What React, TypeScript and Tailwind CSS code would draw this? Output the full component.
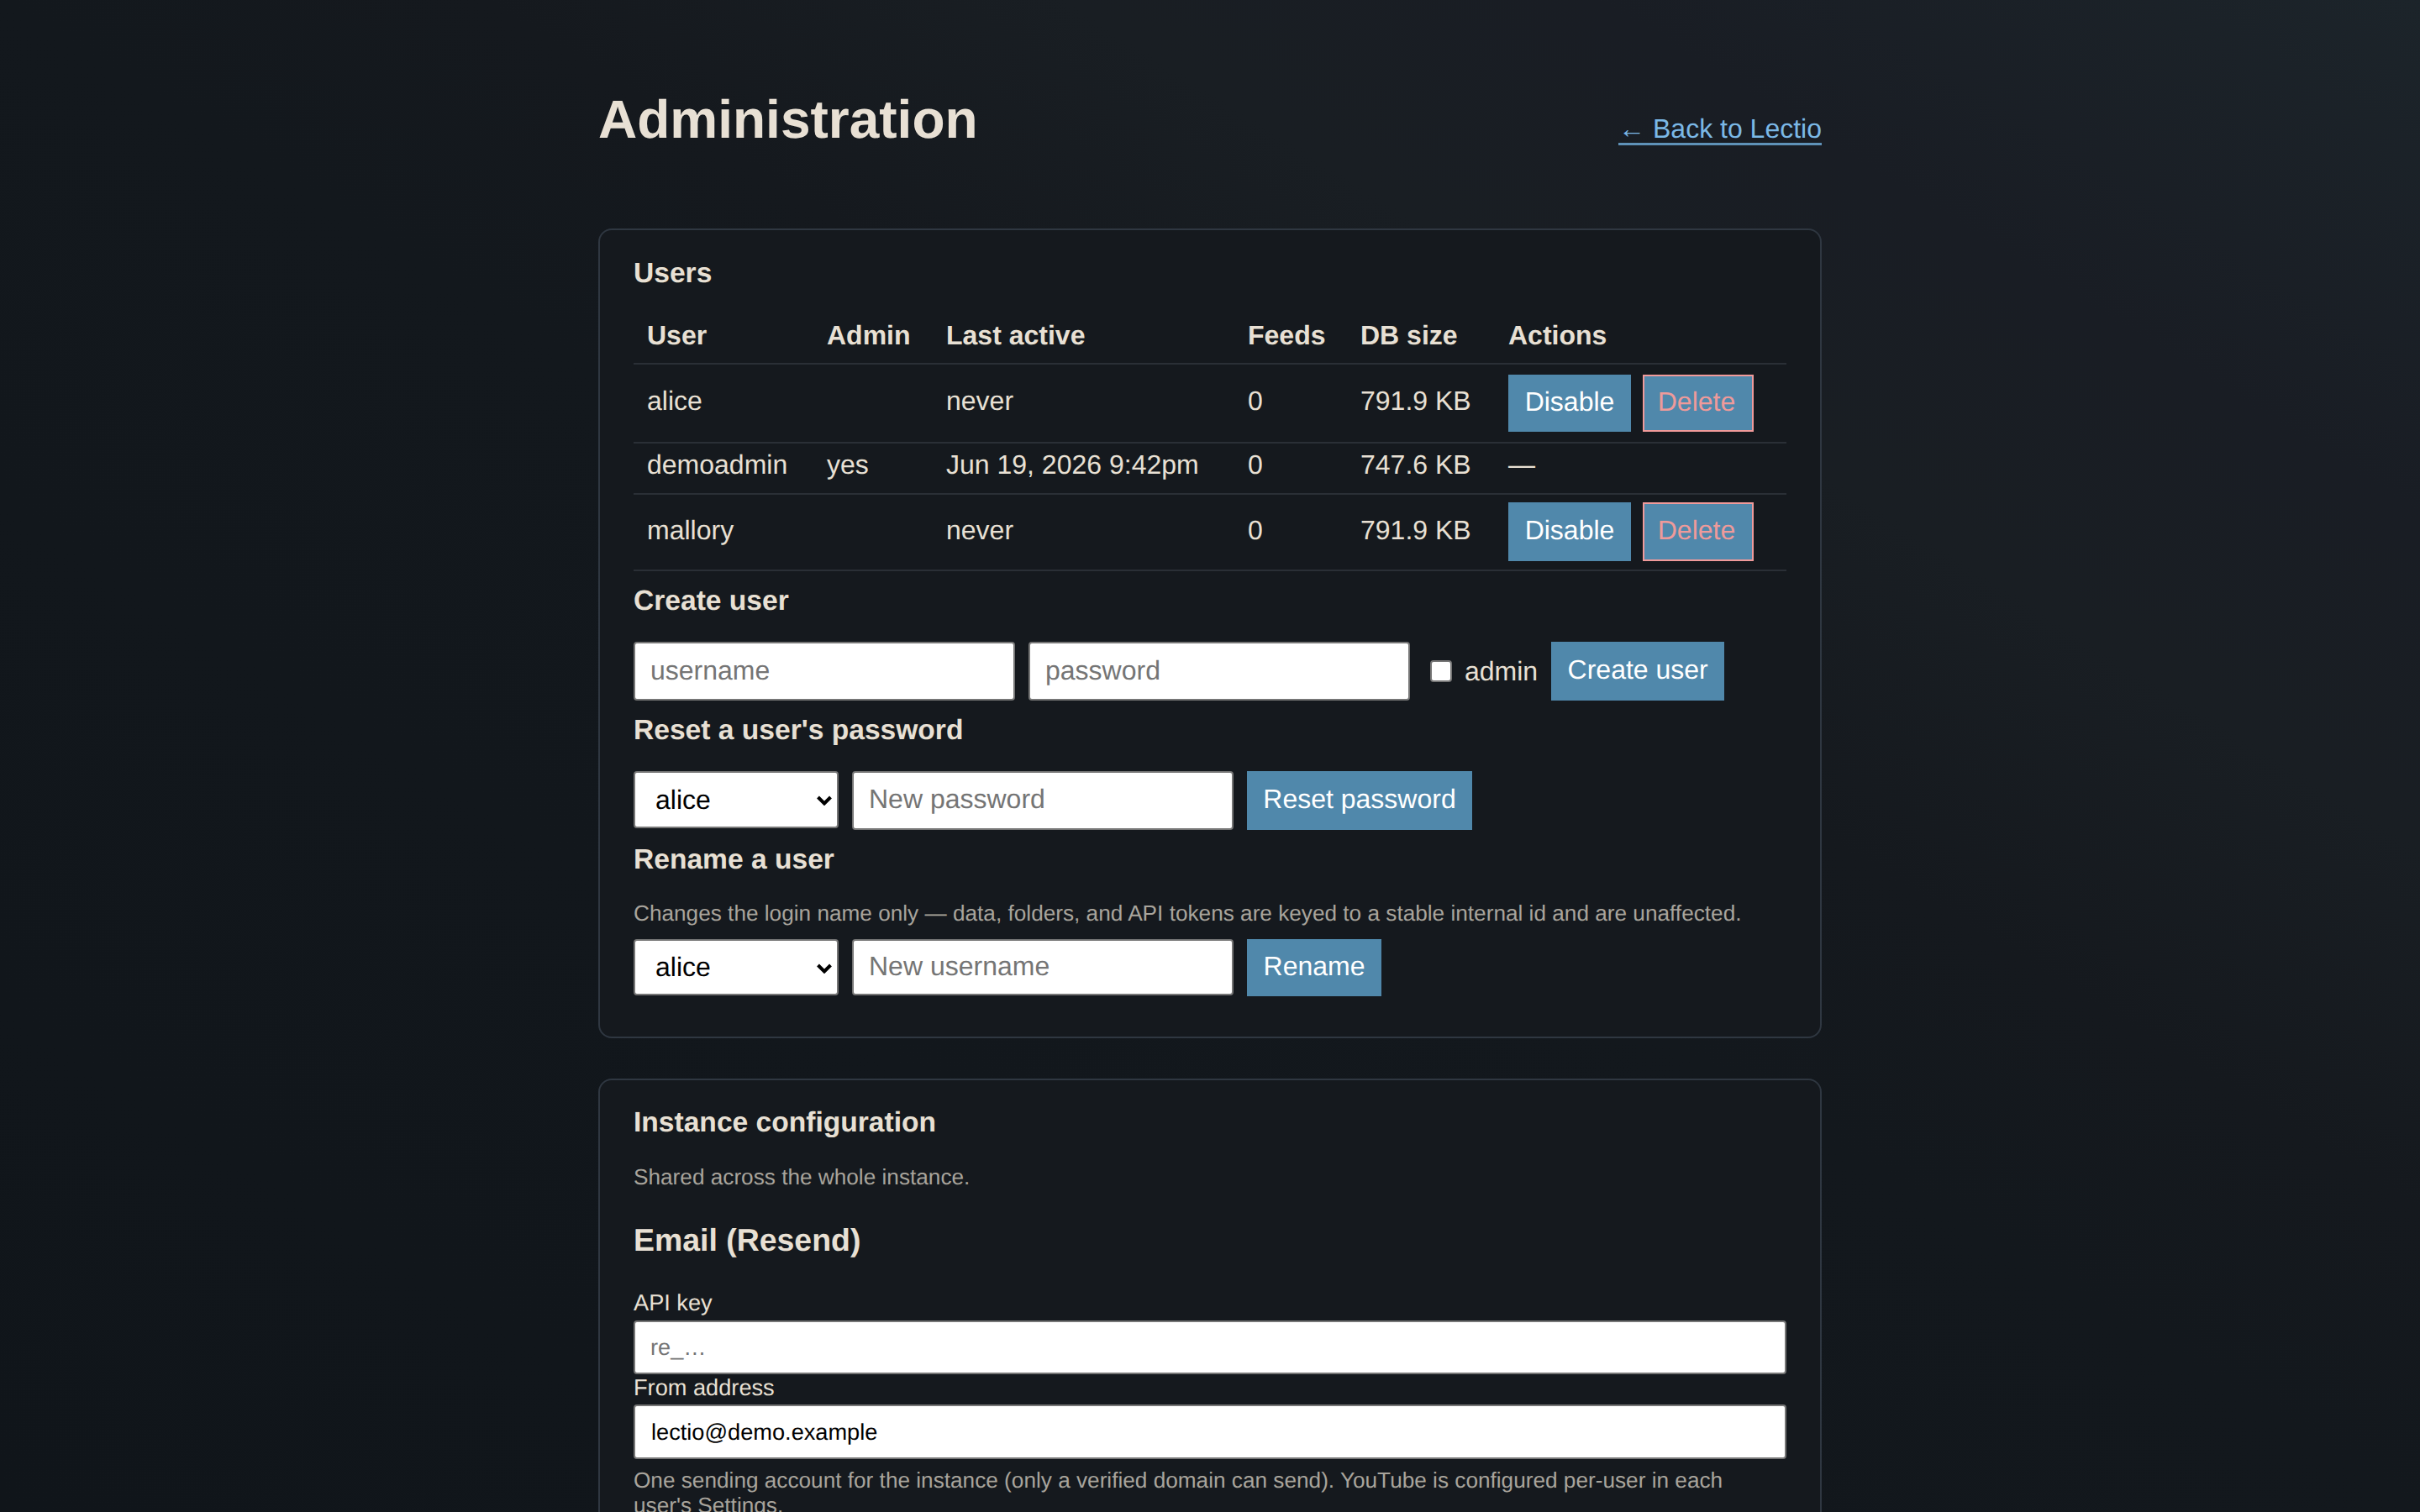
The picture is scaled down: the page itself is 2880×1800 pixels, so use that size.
const USERS = [
  { name: "alice", admin: "", active: "never", feeds: "0", size: "791.9 KB", canEdit: true, cell: "pt-[25px]", action: "py-[12px]", h: "h-[68px]" },
  { name: "demoadmin", admin: "yes", active: "Jun 19, 2026 9:42pm", feeds: "0", size: "747.6 KB", canEdit: false, cell: "pt-[7px] pb-[15px]", action: "pt-[7px] pb-[15px]", h: "" },
  { name: "mallory", admin: "", active: "never", feeds: "0", size: "791.9 KB", canEdit: true, cell: "pt-[24px]", action: "pt-[9px] pb-[10px]", h: "h-[70px]" },
];

const HEADERS = [
  { label: "User", w: "w-[214px]" },
  { label: "Admin", w: "w-[142px]" },
  { label: "Last active", w: "w-[359px]" },
  { label: "Feeds", w: "w-[134px]" },
  { label: "DB size", w: "w-[176px]" },
  { label: "Actions", w: "w-[347px]" },
];

const inputClass =
  "rounded-[4px] border-2 border-[#767676] bg-white px-[18px] text-black [text-rendering:geometricPrecision] placeholder:text-[#757575] outline-none";

const SelectUser = ({ h }: { h: string }) => (
  <div className={`relative w-[244px] ${h}`}>
    <select className="h-full w-full appearance-none rounded-[4px] border-2 border-[#767676] bg-white pl-[24px] text-[32px] text-black [text-rendering:geometricPrecision]">
      <option>alice</option>
    </select>
    <svg className="pointer-events-none absolute right-[8px] top-[29px]" width="18" height="12" viewBox="0 0 18 12" fill="none">
      <path d="M1.5 2 L9 9.5 L16.5 2" stroke="#000" strokeWidth="4" />
    </svg>
  </div>
);

const Btn = ({ children, className = "" }: { children: React.ReactNode; className?: string }) => (
  <button className={`bg-[#5088ab] pb-[3px] text-center text-[32px] text-white [text-rendering:geometricPrecision] ${className}`}>{children}</button>
);

const App = () => {
  return (
    <div className="h-[1800px] overflow-hidden bg-[linear-gradient(to_top_right,#10151a_0%,#13181d_50%,#15191e_60%,#191e23_72%,#191d24_83%,#1c242a_100%)] font-['Liberation_Sans',Arial,sans-serif] text-[32px] leading-[37px] text-[#e8e0d4] [text-rendering:geometricPrecision]">
      <div className="mx-auto w-[1456px] pt-[105px]">
        {/* Header */}
        <div className="flex items-baseline justify-between">
          <h1 className="text-[64px] font-bold leading-[74px]">Administration</h1>
          <a className="border-b-[3px] border-[#5f92b8] leading-[34px] text-[#7bb8e6]">← Back to Lectio</a>
        </div>

        {/* Users */}
        <section className="mt-[93px] rounded-[16px] border-2 border-[#2f3741] bg-[#15191e] px-[40px] pt-[32px] pb-[48px]">
          <h2 className="text-[33.6px] font-bold leading-[39px]">Users</h2>
          <table className="mt-[22px] w-full table-fixed border-collapse">
            <thead>
              <tr className="border-b-2 border-[#2a2f36]">
                {HEADERS.map((col) => (
                  <th key={col.label} className={`${col.w} px-[16px] py-[14px] text-left font-bold`}>{col.label}</th>
                ))}
              </tr>
            </thead>
            <tbody>
              {USERS.map((u) => (
                <tr key={u.name} className="border-b-2 border-[#2a2f36]">
                  <td className={`px-[16px] align-top ${u.cell}`}>{u.name}</td>
                  <td className={`px-[16px] align-top ${u.cell}`}>{u.admin}</td>
                  <td className={`whitespace-nowrap px-[16px] align-top ${u.cell}`}>{u.active}</td>
                  <td className={`px-[16px] align-top ${u.cell}`}>{u.feeds}</td>
                  <td className={`px-[16px] align-top ${u.cell}`}>{u.size}</td>
                  <td className={`px-[16px] align-top ${u.action}`}>
                    {u.canEdit ? (
                      <div className="flex gap-[14px]">
                        <Btn className={`w-[146px] ${u.h}`}>Disable</Btn>
                        <Btn className={`w-[132px] border-2 border-[#f09a9a] pr-[4px] !text-[#ee9a9a] ${u.h}`}>Delete</Btn>
                      </div>
                    ) : (
                      "—"
                    )}
                  </td>
                </tr>
              ))}
            </tbody>
          </table>

          {/* Create user */}
          <h3 className="mt-[16px] text-[33.6px] font-bold leading-[39px]">Create user</h3>
          <div className="mt-[29px] flex items-center">
            <input className={`${inputClass} h-[70px] w-[454px] pb-[2px] text-[32px]`} placeholder="username" />
            <input className={`${inputClass} ml-[16px] h-[70px] w-[454px] pb-[2px] text-[32px]`} placeholder="password" />
            <span className="ml-[24px] h-[26px] w-[26px] rounded-[4px] border-2 border-[#767676] bg-white" />
            <label className="ml-[15px]">admin</label>
            <Btn className="ml-[16px] h-[70px] w-[206px]">Create user</Btn>
          </div>

          {/* Reset password */}
          <h3 className="mt-[16px] text-[33.6px] font-bold leading-[39px]">Reset a user's password</h3>
          <div className="mt-[29px] flex items-start">
            <SelectUser h="h-[68px]" />
            <input className={`${inputClass} ml-[16px] h-[70px] w-[454px] pb-[3px] text-[32px]`} placeholder="New password" />
            <Btn className="ml-[16px] h-[70px] w-[268px]">Reset password</Btn>
          </div>

          {/* Rename */}
          <h3 className="mt-[16px] text-[33.6px] font-bold leading-[39px]">Rename a user</h3>
          <p className="mt-[29px] text-[26.2px] leading-[30px] text-[#a8a49c]">
            Changes the login name only — data, folders, and API tokens are keyed to a stable internal id and are unaffected.
          </p>
          <div className="mt-[16px] flex items-start">
            <SelectUser h="h-[67px]" />
            <input className={`${inputClass} ml-[16px] h-[67px] w-[454px] pb-[3px] text-[32px]`} placeholder="New username" />
            <Btn className="ml-[16px] h-[68px] w-[160px]">Rename</Btn>
          </div>
        </section>

        {/* Instance configuration */}
        <section className="mt-[48px] rounded-[16px] border-2 border-[#2f3741] bg-[#15191e] px-[40px] pt-[31px] pb-[50px]">
          <h2 className="text-[33.6px] font-bold leading-[39px]">Instance configuration</h2>
          <p className="mt-[30px] text-[26.2px] leading-[30px] text-[#a8a49c]">Shared across the whole instance.</p>
          <h3 className="mt-[39px] text-[37.44px] font-bold leading-[43px]">Email (Resend)</h3>
          <label className="mt-[37px] block text-[27.2px] leading-[31px]">API key</label>
          <input className={`${inputClass} mt-[6px] block h-[64px] w-full text-[27.2px]`} placeholder="re_…" />
          <label className="block text-[27.2px] leading-[31px]">From address</label>
          <input className={`${inputClass} mt-[5px] block h-[65px] w-full !pl-[19px] text-[27.2px]`} defaultValue="lectio@demo.example" />
          <p className="mt-[10px] text-[26.2px] leading-[30px] text-[#a8a49c]">
            One sending account for the instance (only a verified domain can send). YouTube is configured per-user in each user's Settings.
          </p>
        </section>
      </div>
    </div>
  );
};

export default App;
